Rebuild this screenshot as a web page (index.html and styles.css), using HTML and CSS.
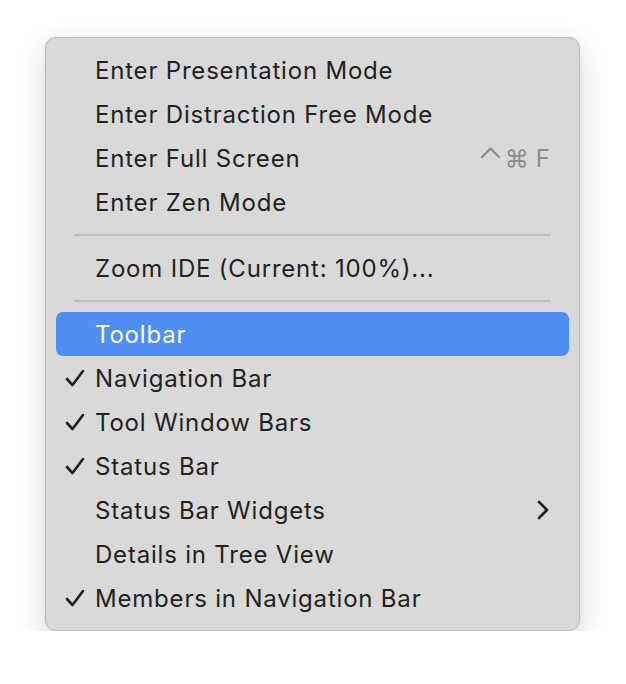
FILE: index.html
```html
<!DOCTYPE html>
<html lang="en">
<head>
    <meta charset="UTF-8">
    <title>View Appearance</title>
    <link rel="stylesheet" href="styles.css">
</head>
<body>
    <div class="menu">
        <div class="item"><span class="check"></span><span class="label">Enter Presentation Mode</span></div>
        <div class="item"><span class="check"></span><span class="label">Enter Distraction Free Mode</span></div>
        <div class="item">
            <span class="check"></span><span class="label">Enter Full Screen</span>
            <span class="shortcut">
                <svg class="ctrl" width="21" height="24" viewBox="0 0 21 24"><path d="M2 11 L10.5 2.5 L19 11" fill="none" stroke="#8c8c8c" stroke-width="2.2" stroke-linecap="round" stroke-linejoin="round"/></svg>
                <span>⌘</span><span>F</span>
            </span>
        </div>
        <div class="item"><span class="check"></span><span class="label">Enter Zen Mode</span></div>
        <div class="separator"></div>
        <div class="item"><span class="check"></span><span class="label">Zoom IDE (Current: 100%)...</span></div>
        <div class="separator"></div>
        <div class="item selected"><span class="check"></span><span class="label">Toolbar</span></div>
        <div class="item">
            <span class="check"><svg width="20" height="18" viewBox="0 0 20 18"><path d="M2 10 L7.5 16 L18 2" fill="none" stroke="#1f1f1f" stroke-width="2.6" stroke-linecap="round" stroke-linejoin="round"/></svg></span>
            <span class="label">Navigation Bar</span>
        </div>
        <div class="item">
            <span class="check"><svg width="20" height="18" viewBox="0 0 20 18"><path d="M2 10 L7.5 16 L18 2" fill="none" stroke="#1f1f1f" stroke-width="2.6" stroke-linecap="round" stroke-linejoin="round"/></svg></span>
            <span class="label">Tool Window Bars</span>
        </div>
        <div class="item">
            <span class="check"><svg width="20" height="18" viewBox="0 0 20 18"><path d="M2 10 L7.5 16 L18 2" fill="none" stroke="#1f1f1f" stroke-width="2.6" stroke-linecap="round" stroke-linejoin="round"/></svg></span>
            <span class="label">Status Bar</span>
        </div>
        <div class="item">
            <span class="check"></span><span class="label">Status Bar Widgets</span>
            <svg class="chevron" width="12" height="20" viewBox="0 0 12 20">
                <path d="M2 2 L10 10 L2 18" fill="none" stroke="#1f1f1f" stroke-width="2.6" stroke-linecap="round" stroke-linejoin="round"/>
            </svg>
        </div>
        <div class="item"><span class="check"></span><span class="label">Details in Tree View</span></div>
        <div class="item">
            <span class="check"><svg width="20" height="18" viewBox="0 0 20 18"><path d="M2 10 L7.5 16 L18 2" fill="none" stroke="#1f1f1f" stroke-width="2.6" stroke-linecap="round" stroke-linejoin="round"/></svg></span>
            <span class="label">Members in Navigation Bar</span>
        </div>
    </div>
</body>
</html>
```

FILE: styles.css
```css
body {
    margin: 0;
    background-color: #ffffff;
    font-family: Inter, "Noto Sans", sans-serif;
    color: #222222;
}

.menu {
    margin: 37px 0 0 45px;
    width: 535px;
    box-sizing: border-box;
    padding: 10px 10px 10px 10px;
    background-color: #d9d9d9;
    border: 1px solid #bcbcbc;
    border-radius: 11px;
    box-shadow: 0 10px 30px rgba(0, 0, 0, 0.16), 0 0 3px rgba(0, 0, 0, 0.08);
}

.item {
    display: flex;
    align-items: center;
    height: 44px;
    padding: 0 19px 0 9px;
    border-radius: 7px;
    font-size: 24px;
    letter-spacing: 0.8px;
}

.item.selected {
    background-color: #4f8ef2;
    color: #ffffff;
}

.check {
    display: flex;
    align-items: center;
    width: 30px;
    height: 44px;
}

.label {
    flex: 1;
}

.shortcut {
    display: flex;
    align-items: center;
    gap: 7px;
    color: #8c8c8c;
    letter-spacing: 0;
}

.ctrl {
    margin-right: -3px;
}

.chevron {
    margin-right: 1px;
}

.separator {
    height: 2px;
    margin: 10px 18px 10px 18px;
    background-color: #bdbdbd;
}
```
